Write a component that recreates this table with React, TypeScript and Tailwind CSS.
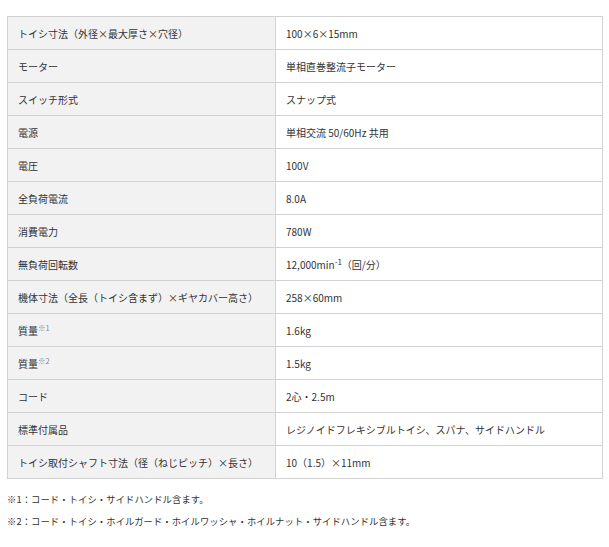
const rows: { label: React.ReactNode; value: React.ReactNode }[] = [
  { label: 'トイシ寸法（外径×最大厚さ×穴径）', value: '100×6×15mm' },
  { label: 'モーター', value: '単相直巻整流子モーター' },
  { label: 'スイッチ形式', value: 'スナップ式' },
  { label: '電源', value: '単相交流 50/60Hz 共用' },
  { label: '電圧', value: '100V' },
  { label: '全負荷電流', value: '8.0A' },
  { label: '消費電力', value: '780W' },
  {
    label: '無負荷回転数',
    value: (
      <>
        12,000min<sup className="text-[8px]">-1</sup>（回/分）
      </>
    ),
  },
  { label: '機体寸法（全長（トイシ含まず）×ギヤカバー高さ）', value: '258×60mm' },
  {
    label: (
      <>
        質量<sup className="text-[7.5px] text-[#888]">※1</sup>
      </>
    ),
    value: '1.6kg',
  },
  {
    label: (
      <>
        質量<sup className="text-[7.5px] text-[#888]">※2</sup>
      </>
    ),
    value: '1.5kg',
  },
  { label: 'コード', value: '2心・2.5m' },
  { label: '標準付属品', value: 'レジノイドフレキシブルトイシ、スパナ、サイドハンドル' },
  { label: 'トイシ取付シャフト寸法（径（ねじピッチ）×長さ）', value: '10（1.5）×11mm' },
];

export default function App() {
  return (
    <div
      className="min-h-screen bg-white text-[#333] px-[7px] pt-4"
      style={{ fontFamily: '"Noto Sans CJK JP", "Noto Sans", sans-serif' }}
    >
      <table className="w-[596px] border-collapse text-[10px]">
        <tbody>
          {rows.map((row, i) => (
            <tr key={i} className="h-[33px]">
              <td className="w-[268px] border border-[#d2d2d2] bg-[#f2f2f2] pl-[10px] align-middle">
                {row.label}
              </td>
              <td className="border border-[#d2d2d2] pl-[10px] align-middle">{row.value}</td>
            </tr>
          ))}
        </tbody>
      </table>
      <div className="mt-[9px] text-[9.3px] leading-[22px] tracking-[0.1px]">
        <p>※1：コード・トイシ・サイドハンドル含ます。</p>
        <p>※2：コード・トイシ・ホイルガード・ホイルワッシャ・ホイルナット・サイドハンドル含ます。</p>
      </div>
    </div>
  );
}
